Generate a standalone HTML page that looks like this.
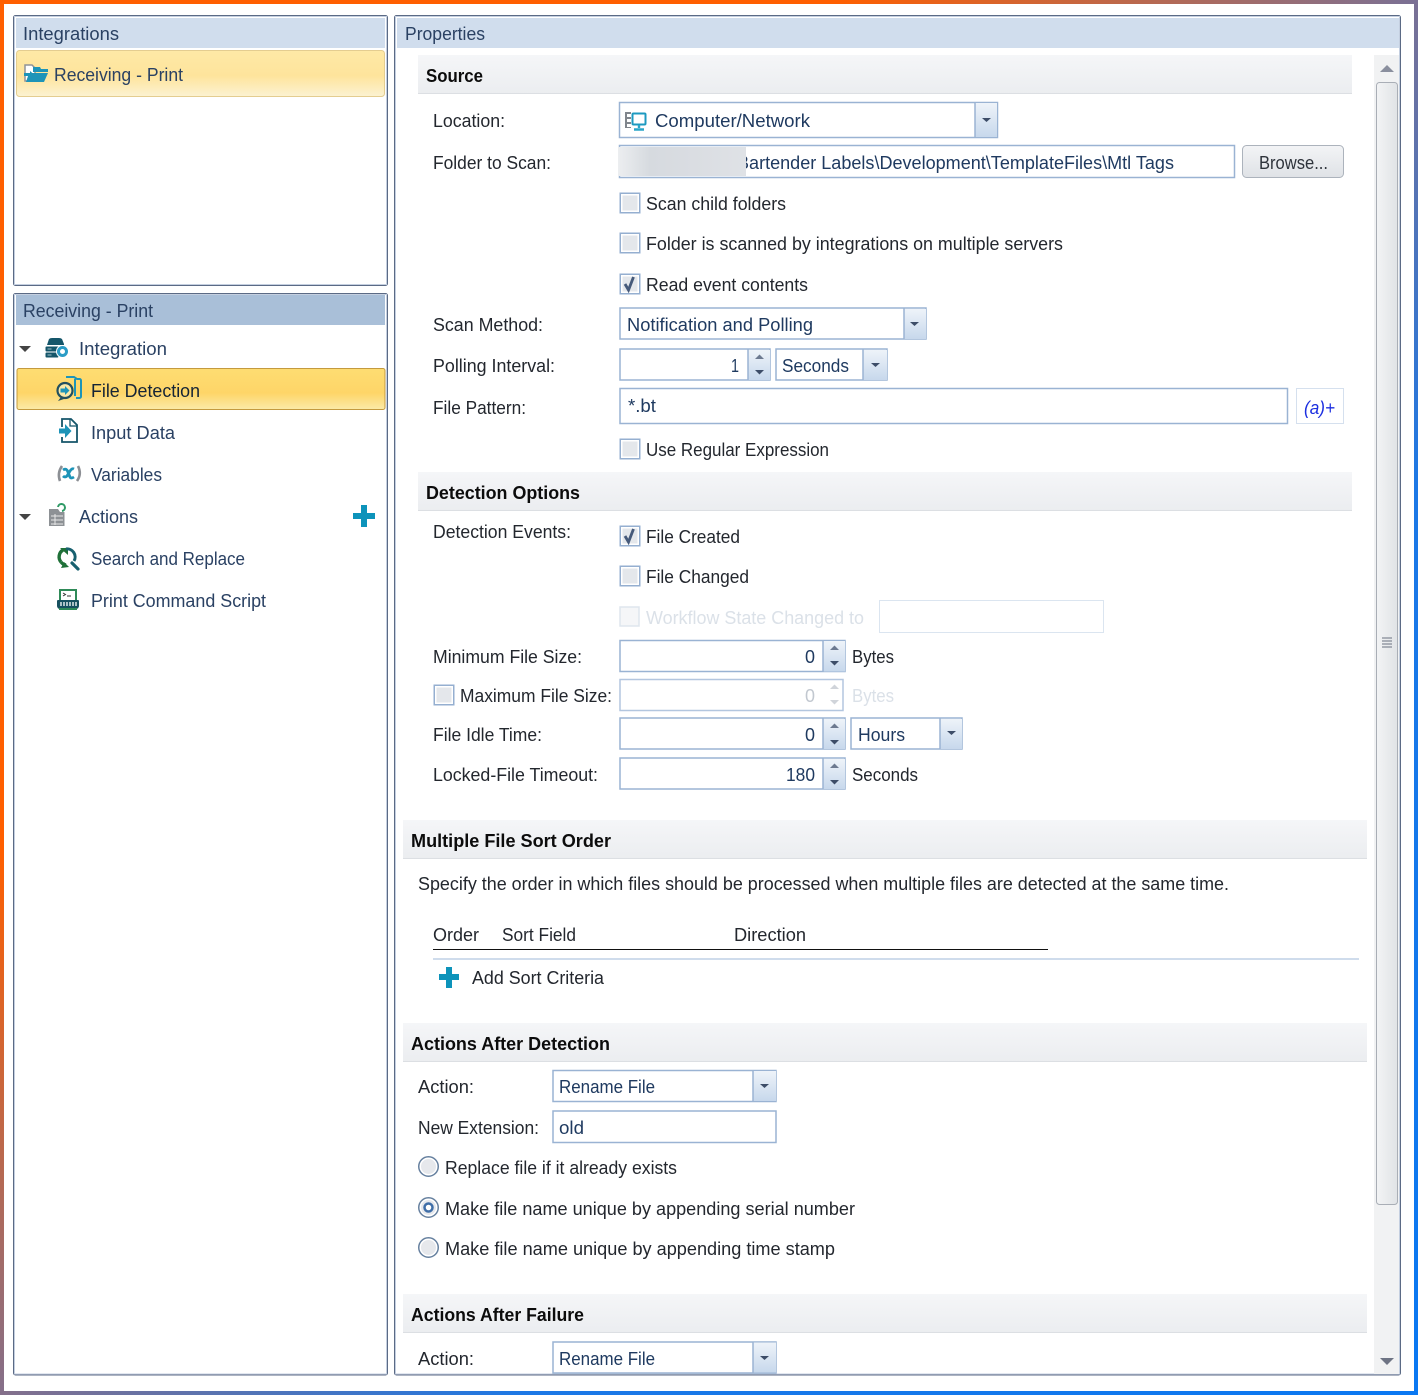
<!DOCTYPE html>
<html><head><meta charset="utf-8"><title>Integration Properties</title>
<style>
html,body{margin:0;padding:0;background:#fff}
svg{display:block}
text{font-family:"Liberation Sans",sans-serif;font-size:18px;fill:#23272e;white-space:pre}
.v{fill:#1f3a60}
.s{font-weight:700;fill:#0c0c0c;font-size:18px}
.t{fill:#2a4163}
.d{fill:#dbe1e8}
.box{fill:#fff;stroke:#9ab3d3;stroke-width:1.5}
.sec{fill:url(#sec)}
.ln{fill:#dcdfe3}
.btn{fill:url(#drop);}
.ar{fill:#3d4d68}
.au{fill:#6d7a90}
</style></head><body>
<svg width="1418" height="1395" viewBox="0 0 1418 1395" xmlns="http://www.w3.org/2000/svg">
<defs>
<linearGradient id="frame" gradientUnits="userSpaceOnUse" x1="0" y1="0" x2="1418" y2="1395">
<stop offset="0" stop-color="#ff5f00"/><stop offset=".3" stop-color="#ff5f00"/><stop offset=".5" stop-color="#7f7090"/><stop offset=".68" stop-color="#1c78e6"/><stop offset="1" stop-color="#0a78f2"/>
</linearGradient>
<linearGradient id="sec" x1="0" y1="0" x2="0" y2="1"><stop offset="0" stop-color="#f5f6f8"/><stop offset="1" stop-color="#ebedf0"/></linearGradient>
<linearGradient id="sel1" x1="0" y1="0" x2="0" y2="1"><stop offset="0" stop-color="#fee9a6"/><stop offset=".55" stop-color="#fee49c"/><stop offset="1" stop-color="#fcf2d2"/></linearGradient>
<linearGradient id="sel2" x1="0" y1="0" x2="0" y2="1"><stop offset="0" stop-color="#fedd72"/><stop offset=".6" stop-color="#fed568"/><stop offset="1" stop-color="#fbeaa8"/></linearGradient>
<linearGradient id="drop" x1="0" y1="0" x2="0" y2="1"><stop offset="0" stop-color="#eef3f9"/><stop offset="1" stop-color="#c7d8ec"/></linearGradient>
<linearGradient id="btn" x1="0" y1="0" x2="0" y2="1"><stop offset="0" stop-color="#f3f4f6"/><stop offset="1" stop-color="#dfe2e6"/></linearGradient>
<linearGradient id="thumb" x1="0" y1="0" x2="1" y2="0"><stop offset="0" stop-color="#f3f4f5"/><stop offset="1" stop-color="#e0e3e6"/></linearGradient>
<linearGradient id="blur" x1="0" y1="0" x2="1" y2="0"><stop offset="0" stop-color="#eceef0"/><stop offset=".25" stop-color="#d6dadf"/><stop offset=".6" stop-color="#dadde2"/><stop offset="1" stop-color="#dfe2e6"/></linearGradient>
<clipPath id="rp"><rect x="395" y="16" width="1005" height="1358"/></clipPath>
<g id="cb"><rect x="0.750" y="0.750" width="19.500" height="19.500" fill="#fff" stroke="#95afd0" stroke-width="1.500"/><rect x="3" y="3" width="15" height="15" fill="#e4e7eb"/></g>
<g id="rb"><circle cx="0" cy="0" r="9.750" fill="#fff" stroke="#66809f" stroke-width="1.500"/><circle cx="0" cy="0" r="7.500" fill="#e6e8ec"/></g>
</defs>
<rect width="1418" height="1395" fill="url(#frame)"/>
<rect x="4" y="4" width="1410" height="1387" fill="#fff"/>

<!-- left top panel -->
<rect x="13.500" y="15.500" width="374" height="270" rx="2" fill="#fff" stroke="#5b6a85"/>
<rect x="14.500" y="16.500" width="372" height="268" fill="none" stroke="#c4cfe0"/>
<rect x="16" y="18" width="369" height="30" fill="#d0dded"/>
<text class="t" x="23" y="40" textLength="96" lengthAdjust="spacingAndGlyphs">Integrations</text>
<rect x="16.500" y="50.500" width="368" height="46" rx="3" fill="url(#sel1)" stroke="#e4cd90"/>
<path d="M25 65h7l3 3v13H25z" fill="#fff" stroke="#8f9398" stroke-width="1.500"/>
<path d="M33 67h7l1 2h7v3H33z" fill="#1d94b8"/>
<path d="M29 73h19l-4 9H26z" fill="#1d94b8"/>
<path d="M24 73h6v-2l4 3.500-4 3.500v-2h-6z" fill="#1d94b8"/>
<text class="t" x="54" y="81" textLength="129" lengthAdjust="spacingAndGlyphs">Receiving - Print</text>

<!-- left bottom panel -->
<rect x="13.500" y="293.500" width="374" height="1081.500" rx="2" fill="#fff" stroke="#5b6a85"/>
<rect x="14.500" y="294.500" width="372" height="1079.500" fill="none" stroke="#c4cfe0"/>
<rect x="16" y="295" width="369" height="30" fill="#a9bfd8"/>
<text class="t" x="23" y="317" textLength="130" lengthAdjust="spacingAndGlyphs">Receiving - Print</text>

<path d="M19 346h12l-6 6z" fill="#444"/>
<path d="M47 345l2-6q1-1 3-1h7q2 0 3 1l2 5v1z" fill="#15566a"/>
<rect x="45.500" y="346.500" width="15" height="5" rx="1" fill="#15566a"/>
<rect x="45.500" y="352.500" width="13" height="5" rx="1" fill="#15566a"/>
<path d="M47.500 349h4M47.500 355h4" stroke="#9fc0c8" stroke-width="1"/>
<circle cx="62.500" cy="351.500" r="6.500" fill="#fff"/>
<circle cx="62.500" cy="351.500" r="4" fill="none" stroke="#2a9cc6" stroke-width="3"/>
<text class="t" x="79" y="355" textLength="88" lengthAdjust="spacingAndGlyphs">Integration</text>

<rect x="17" y="368.500" width="368" height="41" rx="2" fill="url(#sel2)" stroke="#c49a3e"/>
<path d="M66 377h8l3 2h2.500a1.500 1.500 0 0 1 1.500 1.500v16a1.500 1.500 0 0 1-1.500 1.500H76" fill="none" stroke="#1d94b8" stroke-width="2"/>
<path d="M75 379v17" stroke="#1d94b8" stroke-width="2"/>
<circle cx="65" cy="390.500" r="7.500" fill="#fbe9a8" stroke="#23505f" stroke-width="2.200"/>
<path d="M60.500 388.500h4.500v-2.500l4.500 4.500-4.500 4.500v-2.500h-4.500z" fill="#1d94b8"/>
<path d="M58 401l3-4 3 2z" fill="#23505f"/>
<text x="91" y="397" textLength="109" lengthAdjust="spacingAndGlyphs" style="fill:#152436">File Detection</text>

<path d="M62 427v-8h9l6 6v17H62v-5" fill="none" stroke="#15566a" stroke-width="1.800"/>
<path d="M70 419v7h7" fill="none" stroke="#15566a" stroke-width="1.300"/>
<path d="M59 428.500h6v-4.500l6.500 7-6.500 7v-4.500h-6z" fill="#1d94b8"/>
<text class="t" x="91" y="439" textLength="84" lengthAdjust="spacingAndGlyphs">Input Data</text>

<path d="M62 466q-5 7-2 15" fill="none" stroke="#8c8f94" stroke-width="2.600"/>
<path d="M78 466q4 8-1 15" fill="none" stroke="#8c8f94" stroke-width="2.600"/>
<path d="M63 470q3-2 4.500 1l2.500 6q1 2 4 0M74 469q-2-1-4 2l-3 5q-2 2-4 0" fill="none" stroke="#1d94b8" stroke-width="2.800"/>
<text class="t" x="91" y="481" textLength="71" lengthAdjust="spacingAndGlyphs">Variables</text>

<path d="M19 514h12l-6 6z" fill="#444"/>
<path d="M49 509h9l2 3h4.500v14H49z" fill="#8d9195"/>
<path d="M51 516h12M51 520h12M51 524h12M55 514v11" stroke="#e8e8e8" stroke-width="1"/>
<path d="M58 507a3.500 3.500 0 1 1 4 4" fill="none" stroke="#2f9a66" stroke-width="2"/>
<text class="t" x="79" y="523" textLength="59" lengthAdjust="spacingAndGlyphs">Actions</text>
<path d="M361 505h6v8h8v6h-8v8h-6v-8h-8v-6h8z" fill="#0d93ba"/>

<path d="M61 562a8 8 0 0 1 2-12" fill="none" stroke="#1f7038" stroke-width="3.400"/>
<path d="M66 565a8 8 0 0 1-5-3" fill="none" stroke="#1f7038" stroke-width="3.400"/>
<path d="M60 548h8v7z" fill="#1f7038"/>
<path d="M66 549a8 8 0 0 1 8 12" fill="none" stroke="#17606f" stroke-width="3"/>
<path d="M61 568l8-1-5-5z" fill="#1f7038"/>
<path d="M72 563l6 6" stroke="#17606f" stroke-width="3.200" stroke-linecap="round"/>
<text class="t" x="91" y="565" textLength="154" lengthAdjust="spacingAndGlyphs">Search and Replace</text>

<rect x="60" y="590" width="16" height="11" fill="#fff" stroke="#2f8a58" stroke-width="2"/>
<path d="M63 593l2.500 1.500-2.500 1.500M67 596h4" stroke="#333" fill="none"/>
<path d="M58 600h20a1 1 0 0 1 1 1v5a3 3 0 0 1-3 3H60a3 3 0 0 1-3-3v-5a1 1 0 0 1 1-1z" fill="#17505f"/>
<path d="M61 602v4M64 602v4M67 602v4M70 602v4M73 602v4M76 602v4" stroke="#fff" stroke-width="1.300"/>
<path d="M59 609h18" stroke="#2f8a58" stroke-width="2"/>
<text class="t" x="91" y="607" textLength="175" lengthAdjust="spacingAndGlyphs">Print Command Script</text>

<!-- right panel -->
<rect x="394.500" y="15.500" width="1006" height="1359.500" rx="2" fill="#fff" stroke="#5b6a85"/>
<rect x="395.500" y="16.500" width="1004" height="1357.500" fill="none" stroke="#c4cfe0"/>
<rect x="397" y="18" width="1002" height="30" fill="#d0dded"/>
<text class="t" x="405" y="40" textLength="80" lengthAdjust="spacingAndGlyphs">Properties</text>

<!-- scrollbar -->
<rect x="1374" y="55" width="25" height="1319" fill="#f1f2f3"/>
<path d="M1380 72h14l-7-7z" fill="#8a8f9e"/>
<rect x="1376.500" y="82.500" width="21" height="1122" rx="3" fill="url(#thumb)" stroke="#a9aeb6"/>
<path d="M1382 638h10M1382 641h10M1382 644h10M1382 647h10" stroke="#6a7180" stroke-width="1"/>
<path d="M1380 1358h14l-7 7z" fill="#6e7484"/>

<!-- Source -->
<rect class="sec" x="418" y="55" width="934" height="39"/><rect class="ln" x="418" y="93" width="934" height="1"/>
<text class="s" x="426" y="82" textLength="57" lengthAdjust="spacingAndGlyphs">Source</text>
<text x="433" y="127" textLength="72" lengthAdjust="spacingAndGlyphs">Location:</text>
<rect class="box" x="619.500" y="102.500" width="378" height="35"/>
<rect class="btn" x="975" y="103" width="22" height="34"/><path d="M975 103v34" stroke="#9ab3d3" stroke-width="1.500"/>
<path d="M982 118h9l-4.500 4z" class="ar"/>
<path d="M625 112h6v2h-4v3h4v2h-4v3h4v2h-4v3h4v1h-6z" fill="#80858c"/>
<rect x="632.500" y="113.500" width="13" height="11" rx="1" fill="#fff" stroke="#1d9ac0" stroke-width="2"/>
<path d="M639 125v3M634 129.500h10" stroke="#2aa5c8" stroke-width="2.400"/>
<text class="v" x="655" y="127" textLength="155" lengthAdjust="spacingAndGlyphs">Computer/Network</text>

<text x="433" y="169" textLength="118" lengthAdjust="spacingAndGlyphs">Folder to Scan:</text>
<rect class="box" x="619.500" y="145.500" width="615" height="32"/>
<text class="v" x="737" y="169" textLength="437" lengthAdjust="spacingAndGlyphs">Bartender Labels\Development\TemplateFiles\Mtl Tags</text>
<rect x="618" y="147" width="128" height="29" fill="url(#blur)"/>
<rect x="1242.500" y="145.500" width="101" height="32" rx="4" fill="url(#btn)" stroke="#acb3bc"/>
<text x="1259" y="169" textLength="69" lengthAdjust="spacingAndGlyphs" style="fill:#2e333b">Browse...</text>

<use href="#cb" x="619.500" y="192.500"/><use href="#cb" x="619.500" y="232.500"/><use href="#cb" x="619.500" y="273.500"/>
<use href="#cb" x="619.500" y="438.500"/><use href="#cb" x="619.500" y="525.500"/><use href="#cb" x="619.500" y="565.500"/>
<use href="#cb" x="433.500" y="684.500"/>
<rect x="620" y="607" width="19" height="19" fill="#f5f6f8" stroke="#dfe6ee" stroke-width="1.500"/>
<path d="M625 284l3.500 6 5-13" fill="none" stroke="#465a7a" stroke-width="2.800"/>
<path d="M625 536l3.500 6 5-13" fill="none" stroke="#465a7a" stroke-width="2.800"/>
<text x="646" y="210" textLength="140" lengthAdjust="spacingAndGlyphs">Scan child folders</text>
<text x="646" y="250" textLength="417" lengthAdjust="spacingAndGlyphs">Folder is scanned by integrations on multiple servers</text>
<text x="646" y="291" textLength="162" lengthAdjust="spacingAndGlyphs">Read event contents</text>

<text x="433" y="331" textLength="110" lengthAdjust="spacingAndGlyphs">Scan Method:</text>
<rect class="box" x="620" y="308" width="306" height="31"/>
<rect class="btn" x="904" y="309" width="22" height="30"/><path d="M904 308v31" stroke="#9ab3d3" stroke-width="1.500"/>
<path d="M910 322h9l-4.500 4z" class="ar"/>
<text class="v" x="627" y="331" textLength="186" lengthAdjust="spacingAndGlyphs">Notification and Polling</text>

<text x="433" y="372" textLength="122" lengthAdjust="spacingAndGlyphs">Polling Interval:</text>
<rect class="box" x="620" y="349" width="150" height="31"/>
<rect class="btn" x="748" y="350" width="22" height="30"/><path d="M748 349v31" stroke="#9ab3d3" stroke-width="1.500"/>
<path d="M755 359h9l-4.500-4.500z" class="au"/>
<path d="M755 370h9l-4.500 4.500z" class="ar"/>
<text class="v" x="731" y="372" textLength="8" lengthAdjust="spacingAndGlyphs">1</text>
<rect class="box" x="776" y="349" width="111" height="31"/>
<rect class="btn" x="863" y="350" width="24" height="30"/><path d="M863 349v31" stroke="#9ab3d3" stroke-width="1.500"/>
<path d="M871 363h9l-4.500 4z" class="ar"/>
<text class="v" x="782" y="372" textLength="67" lengthAdjust="spacingAndGlyphs">Seconds</text>

<text x="433" y="414" textLength="93" lengthAdjust="spacingAndGlyphs">File Pattern:</text>
<rect class="box" x="620" y="388.500" width="667.500" height="35"/>
<text class="v" x="628" y="412" textLength="28" lengthAdjust="spacingAndGlyphs">*.bt</text>
<rect x="1296.500" y="388.500" width="47" height="35" fill="#fff" stroke="#d5e0ee"/>
<text x="1304" y="414" textLength="31" lengthAdjust="spacingAndGlyphs" style="fill:#1c2fe0;font-style:italic">(a)+</text>
<text x="646" y="456" textLength="183" lengthAdjust="spacingAndGlyphs">Use Regular Expression</text>

<!-- Detection options -->
<rect class="sec" x="418" y="472" width="934" height="39"/><rect class="ln" x="418" y="510" width="934" height="1"/>
<text class="s" x="426" y="499" textLength="154" lengthAdjust="spacingAndGlyphs">Detection Options</text>
<text x="433" y="538" textLength="138" lengthAdjust="spacingAndGlyphs">Detection Events:</text>
<text x="646" y="543" textLength="94" lengthAdjust="spacingAndGlyphs">File Created</text>
<text x="646" y="583" textLength="103" lengthAdjust="spacingAndGlyphs">File Changed</text>
<text class="d" x="646" y="624" textLength="218" lengthAdjust="spacingAndGlyphs">Workflow State Changed to</text>
<rect x="879.500" y="600.500" width="224" height="32" fill="#fff" stroke="#dbe5f0"/>

<text x="433" y="663" textLength="149" lengthAdjust="spacingAndGlyphs">Minimum File Size:</text>
<rect class="box" x="620" y="640.500" width="225" height="31"/>
<rect class="btn" x="823" y="641" width="22" height="30.500"/><path d="M823 640v32" stroke="#9ab3d3" stroke-width="1.500"/>
<path d="M830 650h9l-4.500-4.500z" class="au"/><path d="M830 661h9l-4.500 4.500z" class="ar"/>
<text class="v" x="805" y="663" textLength="10" lengthAdjust="spacingAndGlyphs">0</text>
<text x="852" y="663" textLength="42" lengthAdjust="spacingAndGlyphs">Bytes</text>

<text x="460" y="702" textLength="152" lengthAdjust="spacingAndGlyphs">Maximum File Size:</text>
<rect x="620" y="679.500" width="223" height="31" fill="#fff" stroke="#b3c6df" stroke-width="1.500"/>
<path d="M830 689h9l-4.500-4.500z" fill="#d0d4da"/><path d="M830 700h9l-4.500 4.500z" fill="#d0d4da"/>
<text x="805" y="702" textLength="10" lengthAdjust="spacingAndGlyphs" style="fill:#c2c8d0">0</text>
<text class="d" x="852" y="702" textLength="42" lengthAdjust="spacingAndGlyphs">Bytes</text>

<text x="433" y="741" textLength="109" lengthAdjust="spacingAndGlyphs">File Idle Time:</text>
<rect class="box" x="620" y="718" width="225" height="31"/>
<rect class="btn" x="823" y="719" width="22" height="30"/><path d="M823 718v31" stroke="#9ab3d3" stroke-width="1.500"/>
<path d="M830 728h9l-4.500-4.500z" class="au"/><path d="M830 740h9l-4.500 4.500z" class="ar"/>
<text class="v" x="805" y="741" textLength="10" lengthAdjust="spacingAndGlyphs">0</text>
<rect class="box" x="851" y="718" width="111" height="31"/>
<rect class="btn" x="940" y="719" width="22" height="30"/><path d="M940 718v31" stroke="#9ab3d3" stroke-width="1.500"/>
<path d="M947 731h9l-4.500 4z" class="ar"/>
<text class="v" x="858" y="741" textLength="47" lengthAdjust="spacingAndGlyphs">Hours</text>

<text x="433" y="781" textLength="165" lengthAdjust="spacingAndGlyphs">Locked-File Timeout:</text>
<rect class="box" x="620" y="758" width="225" height="31"/>
<rect class="btn" x="823" y="759" width="22" height="30"/><path d="M823 758v31" stroke="#9ab3d3" stroke-width="1.500"/>
<path d="M830 768h9l-4.500-4.500z" class="au"/><path d="M830 780h9l-4.500 4.500z" class="ar"/>
<text class="v" x="786" y="781" textLength="29" lengthAdjust="spacingAndGlyphs">180</text>
<text x="852" y="781" textLength="66" lengthAdjust="spacingAndGlyphs">Seconds</text>

<!-- Multiple File Sort -->
<rect class="sec" x="403" y="820" width="964" height="39"/><rect class="ln" x="403" y="858" width="964" height="1"/>
<text class="s" x="411" y="847" textLength="200" lengthAdjust="spacingAndGlyphs">Multiple File Sort Order</text>
<text x="418" y="890" textLength="811" lengthAdjust="spacingAndGlyphs">Specify the order in which files should be processed when multiple files are detected at the same time.</text>
<text x="433" y="941" textLength="46" lengthAdjust="spacingAndGlyphs">Order</text>
<text x="502" y="941" textLength="74" lengthAdjust="spacingAndGlyphs">Sort Field</text>
<text x="734" y="941" textLength="72" lengthAdjust="spacingAndGlyphs">Direction</text>
<rect x="433" y="949" width="615" height="1" fill="#111"/>
<rect x="433" y="958" width="926" height="2" fill="#cfdcec"/>
<path d="M446 967h6v7h7v6h-7v8h-6v-8h-7v-6h7z" fill="#0d93ba"/>
<text x="472" y="984" textLength="132" lengthAdjust="spacingAndGlyphs">Add Sort Criteria</text>

<!-- Actions After Detection -->
<rect class="sec" x="403" y="1023" width="964" height="39"/><rect class="ln" x="403" y="1061" width="964" height="1"/>
<text class="s" x="411" y="1050" textLength="199" lengthAdjust="spacingAndGlyphs">Actions After Detection</text>
<text x="418" y="1093" textLength="56" lengthAdjust="spacingAndGlyphs">Action:</text>
<rect class="box" x="553" y="1070.500" width="223" height="31"/>
<rect class="btn" x="753" y="1071" width="23" height="30"/><path d="M753 1070v31" stroke="#9ab3d3" stroke-width="1.500"/>
<path d="M760 1084h9l-4.500 4z" class="ar"/>
<text class="v" x="559" y="1093" textLength="96" lengthAdjust="spacingAndGlyphs">Rename File</text>
<text x="418" y="1134" textLength="121" lengthAdjust="spacingAndGlyphs">New Extension:</text>
<rect class="box" x="553" y="1111" width="223" height="31.500"/>
<text class="v" x="559" y="1134" textLength="25" lengthAdjust="spacingAndGlyphs">old</text>

<use href="#rb" x="428.500" y="1166.500"/><use href="#rb" x="428.500" y="1207.500"/><use href="#rb" x="428.500" y="1247.500"/>
<circle cx="428.500" cy="1207.500" r="4" fill="#fff" stroke="#3f6ea8" stroke-width="2.500"/>
<text x="445" y="1174" textLength="232" lengthAdjust="spacingAndGlyphs">Replace file if it already exists</text>
<text x="445" y="1215" textLength="410" lengthAdjust="spacingAndGlyphs">Make file name unique by appending serial number</text>
<text x="445" y="1255" textLength="390" lengthAdjust="spacingAndGlyphs">Make file name unique by appending time stamp</text>

<!-- Actions After Failure -->
<rect class="sec" x="403" y="1294" width="964" height="39"/><rect class="ln" x="403" y="1332" width="964" height="1"/>
<text class="s" x="411" y="1321" textLength="173" lengthAdjust="spacingAndGlyphs">Actions After Failure</text>
<text x="418" y="1365" textLength="56" lengthAdjust="spacingAndGlyphs">Action:</text>
<g clip-path="url(#rp)">
<rect class="box" x="553" y="1342" width="223" height="31"/>
<rect class="btn" x="753" y="1342.500" width="23" height="30"/><path d="M753 1342v31" stroke="#9ab3d3" stroke-width="1.500"/>
<path d="M760 1356h9l-4.500 4z" class="ar"/>
<text class="v" x="559" y="1365" textLength="96" lengthAdjust="spacingAndGlyphs">Rename File</text>
</g>
</svg>
</body></html>
